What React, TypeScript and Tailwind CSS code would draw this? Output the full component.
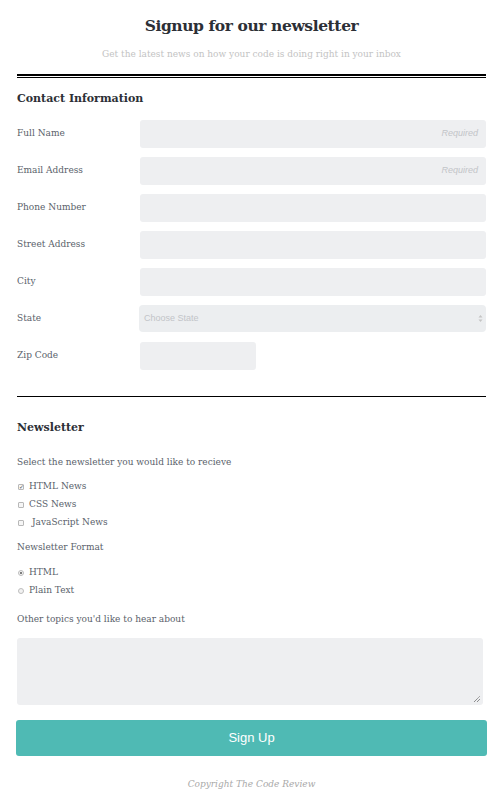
import React from "react";

const serif = { fontFamily: '"DejaVu Serif", "Liberation Serif", serif' };

function Row({ label, children }: { label: string; children: React.ReactNode }) {
  return (
    <div className="flex items-center h-[37px]">
      <label className="w-[123px] shrink-0 text-[9px] text-[#5a5f6b]">{label}</label>
      {children}
    </div>
  );
}

function Input({ placeholder }: { placeholder?: string }) {
  return (
    <div className="flex-1 h-[28px] bg-[#eeeff1] rounded-[3px] flex items-center justify-end pr-[8px]">
      {placeholder && (
        <span className="text-[9px] italic text-[#c2c4c8]" style={{ fontFamily: '"Liberation Sans", Arial, sans-serif' }}>
          {placeholder}
        </span>
      )}
    </div>
  );
}

function Check({ checked, label, extra }: { checked?: boolean; label: string; extra?: boolean }) {
  return (
    <div className="flex items-center h-[18px] text-[9px] text-[#5a5f6b]">
      <span className="w-[6px] h-[6px] border border-[#b8b8b8] rounded-[1px] bg-[#f6f6f6] flex items-center justify-center mr-[5px] ml-[1px]">
        {checked && <span className="text-[6px] leading-none text-[#555]">✓</span>}
      </span>
      <span className={extra ? "ml-[3px]" : ""}>{label}</span>
    </div>
  );
}

function Radio({ checked, label }: { checked?: boolean; label: string }) {
  return (
    <div className="flex items-center h-[18px] text-[9px] text-[#5a5f6b]">
      <span className="w-[6px] h-[6px] border border-[#bdbdbd] rounded-full bg-[#f2f2f2] flex items-center justify-center mr-[5px] ml-[1px]">
        {checked && <span className="w-[2px] h-[2px] rounded-full bg-[#555]" />}
      </span>
      <span>{label}</span>
    </div>
  );
}

export default function App() {
  return (
    <div className="w-[503px] h-[802px] bg-white px-[17px]" style={serif}>
      <div className="pt-[15px] text-center">
        <h1 className="text-[15.5px] font-bold text-[#2c2f36] leading-[22px] tracking-[-0.4px]">Signup for our newsletter</h1>
        <p className="mt-[11px] text-[9px] text-[#c3c3c3] leading-[12px]">
          Get the latest news on how your code is doing right in your inbox
        </p>
      </div>
      <div className="mt-[14px] border-t-[2px] border-black" />
      <div className="mt-[1px] border-t border-black" />

      <h2 className="mt-[13px] text-[11px] font-bold text-[#2c2f36] leading-[16px]">Contact Information</h2>

      <div className="mt-[8px]">
        <Row label="Full Name"><Input placeholder="Required" /></Row>
        <Row label="Email Address"><Input placeholder="Required" /></Row>
        <Row label="Phone Number"><Input /></Row>
        <Row label="Street Address"><Input /></Row>
        <Row label="City"><Input /></Row>
        <Row label="State">
          <div className="flex-1 -ml-[1px] h-[27px] bg-[#eceef0] rounded-[4px] flex items-center justify-between pl-[5px] pr-[3px]">
            <span className="text-[9px] text-[#c2c4c8]" style={{ fontFamily: '"Liberation Sans", Arial, sans-serif' }}>Choose State</span>
            <svg width="5" height="9" viewBox="0 0 5 9">
              <path d="M2.5 1 L4.5 3.5 L0.5 3.5 Z" fill="#c4c4c4" />
              <path d="M2.5 8 L4.5 5.5 L0.5 5.5 Z" fill="#c4c4c4" />
            </svg>
          </div>
        </Row>
        <Row label="Zip Code">
          <div className="w-[116px] h-[28px] bg-[#eeeff1] rounded-[3px]" />
        </Row>
      </div>

      <div className="mt-[22px] border-t border-black" />

      <h2 className="mt-[23px] text-[11px] font-bold text-[#2c2f36] leading-[16px]">Newsletter</h2>
      <p className="mt-[19px] text-[9px] text-[#5a5f6b] leading-[14px]">Select the newsletter you would like to recieve</p>
      <div className="mt-[9px]">
        <Check checked label="HTML News" />
        <Check label="CSS News" />
        <Check label="JavaScript News" extra />
      </div>
      <p className="mt-[8px] text-[9px] text-[#5a5f6b] leading-[14px]">Newsletter Format</p>
      <div className="mt-[10px]">
        <Radio checked label="HTML" />
        <Radio label="Plain Text" />
      </div>
      <p className="mt-[12px] text-[9px] text-[#5a5f6b] leading-[14px]">Other topics you'd like to hear about</p>

      <div className="mt-[12px] mr-[3px] h-[67px] bg-[#eeeff1] rounded-[3px] relative">
        <svg className="absolute right-[2px] bottom-[2px]" width="8" height="8" viewBox="0 0 8 8">
          <path d="M1 7 L7 1 M4 7 L7 4" stroke="#444" strokeWidth="0.8" strokeDasharray="1 0.6" />
        </svg>
      </div>

      <button
        className="mt-[15px] -mx-[1px] w-[calc(100%+2px)] h-[36px] bg-[#4fbab4] rounded-[3px] text-white text-[13px]"
        style={{ fontFamily: '"Liberation Sans", Arial, sans-serif' }}
      >
        Sign Up
      </button>

      <p className="mt-[22px] text-center italic text-[9px] text-[#a9a9a9]">Copyright The Code Review</p>
    </div>
  );
}
